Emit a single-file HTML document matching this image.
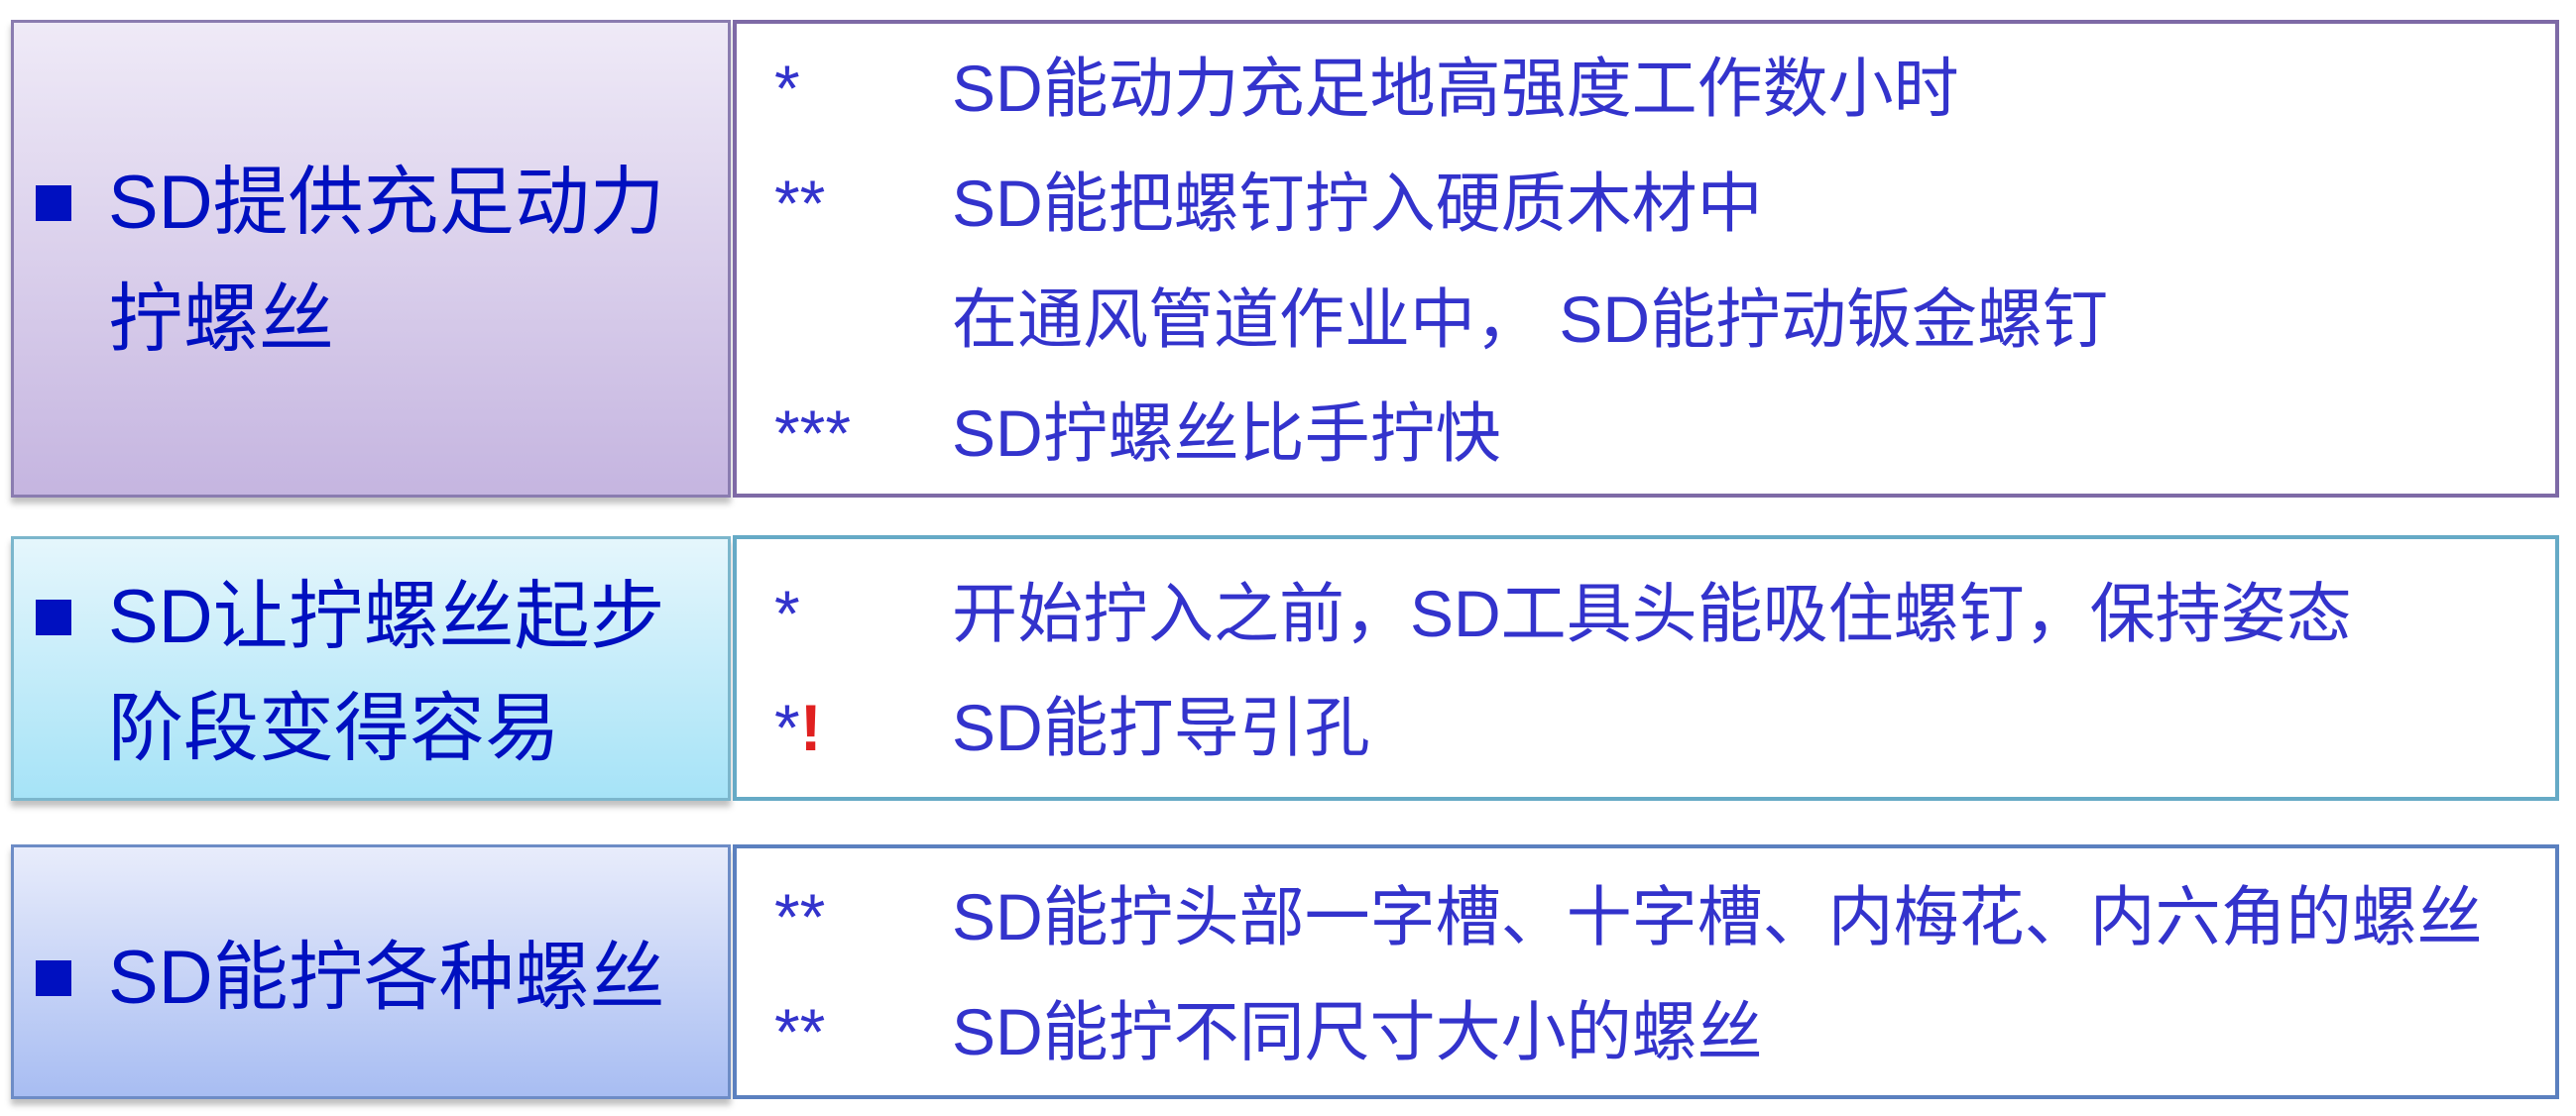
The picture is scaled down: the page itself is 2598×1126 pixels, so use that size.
<!DOCTYPE html>
<html><head><meta charset="utf-8"><style>
html,body{margin:0;padding:0;background:#fff;width:2598px;height:1126px;overflow:hidden;position:relative;font-family:"Liberation Sans","Noto Sans CJK SC",sans-serif}
.lp{position:absolute;left:11px;width:726px;box-sizing:border-box;box-shadow:0 6px 6px rgba(0,0,0,0.25)}
.rp{position:absolute;left:739px;width:1842px;box-sizing:border-box;background:#fff;border:4px solid}
.t{position:absolute;white-space:nowrap;line-height:80px;height:80px}
.h{font-size:76px;color:#0010c0;left:109px}
.b{position:absolute;left:36px;width:36px;height:36px;background:#0010c0}
.s{font-size:66px;color:#3333cc;left:781px}
.x{font-size:66px;color:#3333cc;left:960px}
</style></head><body>
<div class="lp" style="top:20px;height:482px;border:3px solid #8a7cb0;background:linear-gradient(#efeaf7,#c5b5e0)"></div>
<div class="rp" style="top:20px;height:482px;border-color:#7e6aa6"></div>
<div class="lp" style="top:541px;height:267px;border:3px solid #7bb6cc;background:linear-gradient(#e5f6fc,#a6e3f7)"></div>
<div class="rp" style="top:540px;height:268px;border-color:#66aac6"></div>
<div class="lp" style="top:852px;height:257px;border:3px solid #6d8cc6;background:linear-gradient(#e8ecfb,#a8bdf2)"></div>
<div class="rp" style="top:852px;height:257px;border-color:#5b80bf"></div>

<div class="b" style="top:187px"></div>
<div class="t h" style="top:165px">SD提供充足动力</div>
<div class="t h" style="top:283px">拧螺丝</div>
<div class="b" style="top:605px"></div>
<div class="t h" style="top:583px">SD让拧螺丝起步</div>
<div class="t h" style="top:696px">阶段变得容易</div>
<div class="b" style="top:969px"></div>
<div class="t h" style="top:947px">SD能拧各种螺丝</div>

<div class="t s" style="top:49px">*</div>
<div class="t x" style="top:49px">SD能动力充足地高强度工作数小时</div>
<div class="t s" style="top:165px">**</div>
<div class="t x" style="top:165px">SD能把螺钉拧入硬质木材中</div>
<div class="t x" style="top:282px">在通风管道作业中， SD能拧动钣金螺钉</div>
<div class="t s" style="top:397px">***</div>
<div class="t x" style="top:397px">SD拧螺丝比手拧快</div>

<div class="t s" style="top:579px">*</div>
<div class="t x" style="top:579px">开始拧入之前，SD工具头能吸住螺钉，保持姿态</div>
<div class="t s" style="top:694px">*<span style="color:#e02020;font-weight:bold">!</span></div>
<div class="t x" style="top:694px">SD能打导引孔</div>

<div class="t s" style="top:885px">**</div>
<div class="t x" style="top:885px">SD能拧头部一字槽、十字槽、内梅花、内六角的螺丝</div>
<div class="t s" style="top:1001px">**</div>
<div class="t x" style="top:1001px">SD能拧不同尺寸大小的螺丝</div>
</body></html>
